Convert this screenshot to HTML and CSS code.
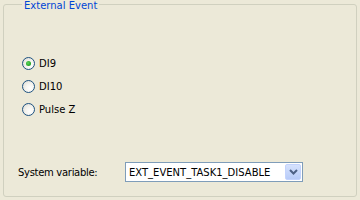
FILE: index.html
```html
<!DOCTYPE html>
<html>
<head>
<meta charset="utf-8">
<link rel="stylesheet" href="styles.css">
</head>
<body>
<div class="page">
  <fieldset class="group">
    <legend class="group-title">External Event</legend>
    <div class="radios">
      <label class="radio-row"><span class="radio checked"><span class="dot"></span></span><span class="radio-text">DI9</span></label>
      <label class="radio-row"><span class="radio"></span><span class="radio-text">DI10</span></label>
      <label class="radio-row"><span class="radio"></span><span class="radio-text">Pulse Z</span></label>
    </div>
    <div class="var-row">
      <span class="var-label">System variable:</span>
      <div class="combo">
        <span class="combo-text">EXT_EVENT_TASK1_DISABLE</span>
        <span class="combo-btn">
          <svg width="9" height="6" viewBox="0 0 9 6"><path d="M1 1 L4.5 4.5 L8 1" fill="none" stroke="#4d6185" stroke-width="2"/></svg>
        </span>
      </div>
    </div>
  </fieldset>
</div>
</body>
</html>
```
FILE: styles.css
```css
html, body {
  margin: 0;
  padding: 0;
  background: #ece9d8;
}
body {
  width: 360px;
  height: 200px;
  overflow: hidden;
  font-family: "DejaVu Sans", sans-serif;
  font-size: 10px;
  color: #000;
}
.page {
  padding: 0 3px;
}
.group {
  margin: 0;
  height: 197px;
  box-sizing: border-box;
  border: 1px solid #d0d0bf;
  border-radius: 3px;
  padding: 0 0 0 14px;
  display: flex;
  flex-direction: column;
}
.group-title {
  color: #0046d5;
  padding: 3px 2px 0 2px;
  margin-left: 4px;
  line-height: 6px;
  font-size: 10px;
}
.radios {
  display: flex;
  flex-direction: column;
  margin-top: 43px;
  margin-left: 4px;
}
.radio-row {
  display: flex;
  align-items: center;
  height: 23px;
  gap: 4px;
}
.radio {
  width: 13px;
  height: 13px;
  box-sizing: border-box;
  border: 1px solid #1c5180;
  border-radius: 50%;
  background: radial-gradient(circle at 65% 65%, #ffffff 0%, #f4f3ee 45%, #d8d7d0 100%);
  display: flex;
  align-items: center;
  justify-content: center;
}
.dot {
  width: 5px;
  height: 5px;
  border-radius: 50%;
  background: radial-gradient(circle at 40% 40%, #5ed45e, #21a121 70%, #1a8a1a);
}
.var-row {
  display: flex;
  align-items: center;
  margin-top: 41px;
}
.var-label {
  width: 107px;
  letter-spacing: -0.3px;
}
.combo {
  width: 178px;
  height: 20px;
  box-sizing: border-box;
  border: 1px solid #7f9db9;
  background: #fff;
  display: flex;
  align-items: center;
  justify-content: space-between;
  padding: 0 1px 0 3px;
}
.combo-btn {
  width: 16px;
  height: 16px;
  box-sizing: border-box;
  border: 1px solid #c3d3fd;
  border-radius: 2px;
  background: linear-gradient(#d6e2fd, #b7cbf8);
  display: flex;
  align-items: center;
  justify-content: center;
}
```
